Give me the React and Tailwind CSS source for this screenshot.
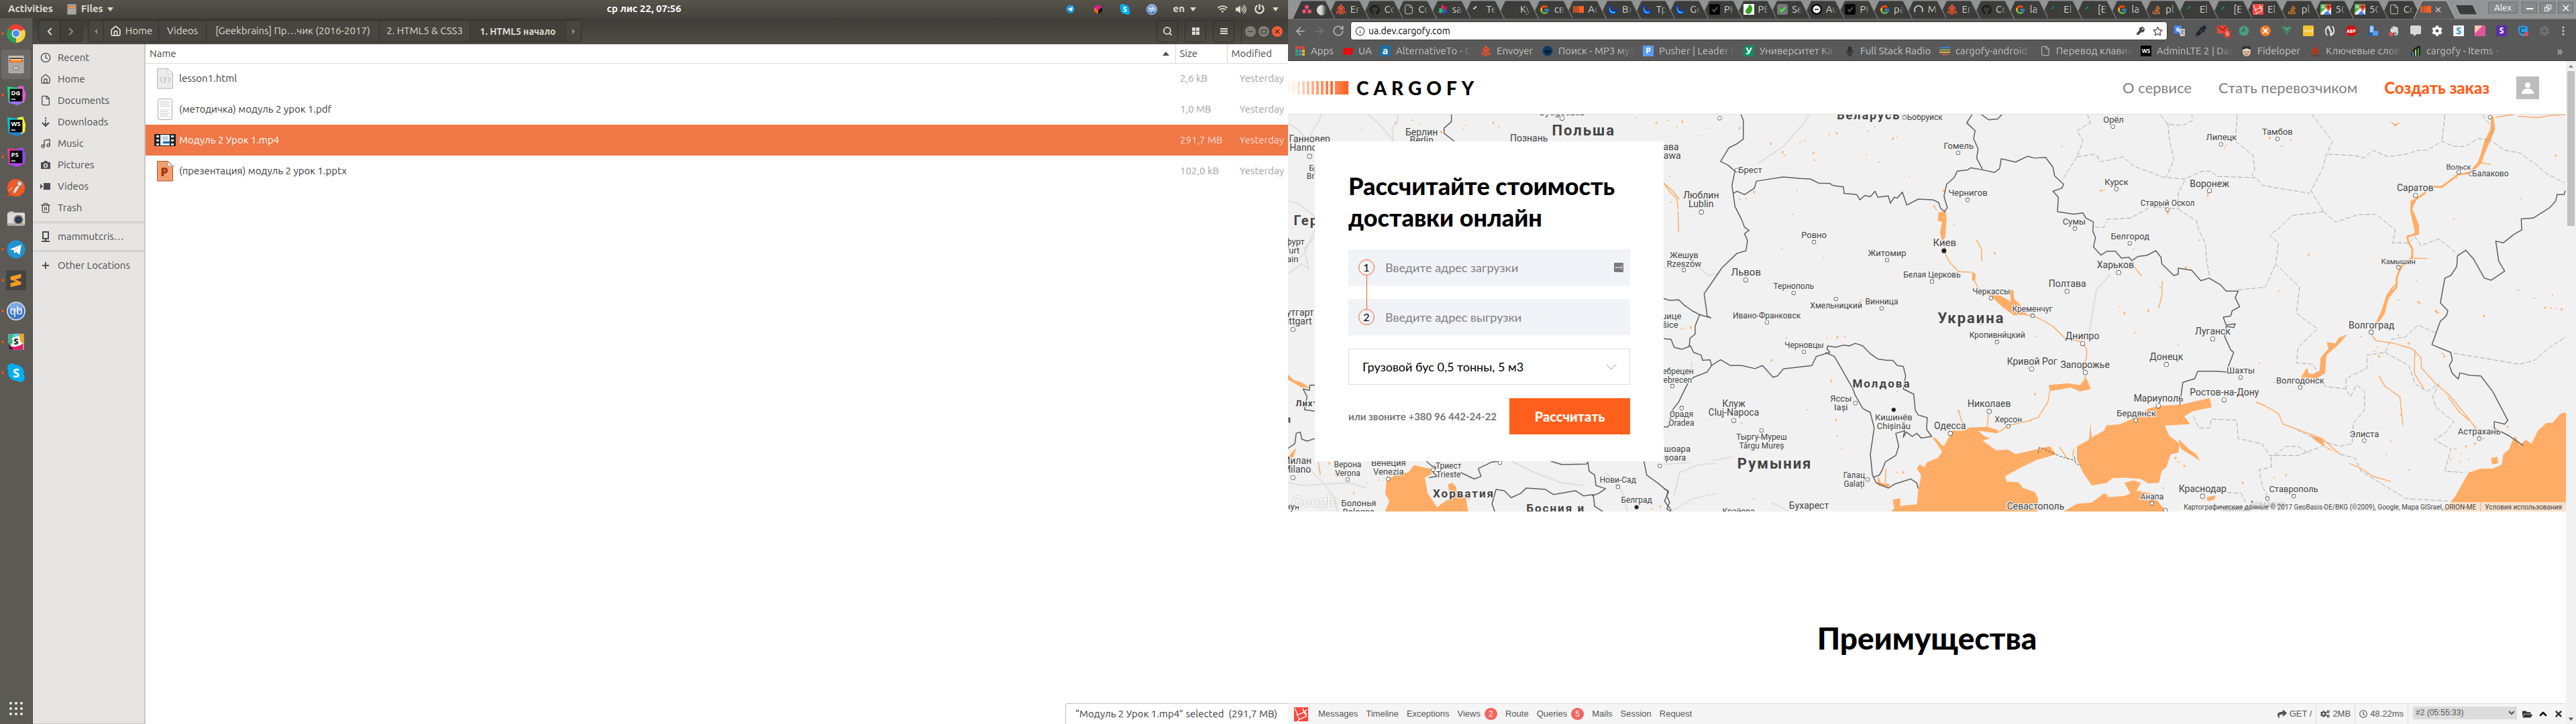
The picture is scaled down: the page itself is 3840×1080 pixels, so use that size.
import React from "react";
import { FaGithub, FaYoutube, FaStackOverflow, FaVuejs, FaMicrophone, FaKey, FaRegStar, FaShare, FaCogs, FaRegClock, FaFolderOpen, FaTimes, FaCog, FaEvernote, FaPowerOff, FaVolumeUp, FaWifi, FaCommentAlt, FaEyeDropper } from "react-icons/fa";
import { FcGoogle } from "react-icons/fc";
import { Home, Search, ArrowLeft, ArrowRight, RotateCw, ChevronLeft, ChevronRight, ChevronUp, File, Clock, Music, Trash2, Info } from "lucide-react";

/* ---------- small drawings ---------- */

const Svg = ({ s = 16, box = 16, children, className = "" }) => (
  <svg width={s} height={s} viewBox={`0 0 ${box} ${box}`} className={`shrink-0 ${className}`} aria-hidden="true">
    {children}
  </svg>
);

const Caret = ({ className = "" }) => (
  <svg width="9" height="6" viewBox="0 0 9 6" className={`shrink-0 ${className}`} aria-hidden="true">
    <path d="M0 0h9L4.500 6z" fill="currentColor" />
  </svg>
);

const Rocket = () => (
  <Svg>
    <g fill="none" stroke="#f0532d" strokeWidth="1.300">
      <path d="M8 .8c2 1.600 2.600 4.200 2.200 7.200H5.800C5.400 5 6 2.400 8 .8z" fill="#f0532d" />
      <path d="M5.500 4.500C3 5 2.500 7 3.800 8.500M10.500 4.500c2.500.5 3 2.500 1.700 4M4.500 9.500 1.500 12v2.500M11.500 9.500l3 2.500v2.500M6.200 9v6.500M8 9v7M9.800 9v6.500M4 11v3.500M12 11v3.500" />
    </g>
    <circle cx="8" cy="4.800" r="1" fill="#3c3c3b" />
  </Svg>
);
const Asana = () => (
  <Svg>
    <g fill="#f0506e"><circle cx="8" cy="4.500" r="3" /><circle cx="4" cy="11" r="3" /><circle cx="12" cy="11" r="3" /></g>
  </Svg>
);
const Burst = () => (
  <Svg>
    <path d="M8 0l2 5-3 3-2-4z" fill="#e8274b" /><path d="M15 5l-4 4-4-2 4-3z" fill="#c71f5b" />
    <path d="M1 7l5-1 2 4-3 4-4-2 2-3z" fill="#1fc46b" /><path d="M8 8l5 1 2 4-4-1-1 4-3-4z" fill="#3c53d9" />
  </Svg>
);
const CargoBars = () => (
  <Svg>
    <g fill="#ff5f1c"><path d="M0 3h1.500v10H0zM2.500 3h1.500v10H2.500zM5 3h2v10H5zM8 3h8v10H8z" /></g>
  </Svg>
);
const Bird = () => (
  <Svg>
    <path d="M1 1l4 2 1 6 3 1 6-3-1 4-4 4-5 0-3-3 1-4z" fill="#1030d8" /><path d="M3 3l2 7 4 2 4-1-3 3-5-1-2-4z" fill="#25d4f5" />
  </Svg>
);
const Ticked = ({ bg = "#060606", fg = "#555" }) => (
  <Svg><rect width="16" height="16" rx="3" fill={bg} /><path d="M4.500 8l2.500 3 5-6" fill="none" stroke={fg} strokeWidth="2" /></Svg>
);
const Pear = () => (
  <Svg><rect width="16" height="16" fill="#fff" /><path d="M10 1c4 3 4 8 1 12-3 3-7 2-8-1-.6-4 3-5 4-8 .5-2 1.500-3 3-3z" fill="#35a020" /></Svg>
);
const Badge = () => (
  <Svg><circle cx="8" cy="8" r="8" fill="#000" /><circle cx="8" cy="8" r="5" fill="#fff" stroke="#fff" strokeWidth="2" strokeDasharray="1.500 1" /><path d="M5 8h6" stroke="#444" strokeWidth="2" /></Svg>
);
const Arc = () => (
  <Svg><path d="M3 12a6 6 0 1 1 10 0" fill="none" stroke="#c9c9c9" strokeWidth="2" /></Svg>
);
const Tick = ({ c }) => (
  <Svg><path d="M3 7c3 0 3-3 5-3" fill="none" stroke={c} strokeWidth="2" /></Svg>
);
const MapsPin = () => (
  <Svg>
    <rect width="16" height="16" rx="1" fill="#4caf50" /><path d="M0 14L13 1l3 3v12H2z" fill="#eee" /><path d="M4 16l6-6 6 6z" fill="#4285f4" /><path d="M0 12l3 3-3 1z" fill="#ffd54f" />
    <path d="M12 0c2.500 0 4 1.700 4 4 0 2.500-3 4-4 8-1-4-4-5.500-4-8 0-2.300 1.500-4 4-4z" fill="#ea4335" /><circle cx="12" cy="4" r="1.500" fill="#8c1b12" /><circle cx="4" cy="4" r="2" fill="none" stroke="#fff" />
  </Svg>
);
const LaravelBox = ({ s = 16 }) => (
  <Svg s={s}><rect width="16" height="16" fill="#f9483c" /><path d="M1 1l5 13 8-4-3-5 4-2M3 9l10-4M10 1l1 4 4 3M4 16l2-2" stroke="#fff" strokeWidth="1" fill="none" /></Svg>
);
const Letter = ({ bg, fg = "#fff", t, r = 1, size = 12, s = 16 }) => (
  <Svg s={s}>
    <rect width="16" height="16" rx={r} fill={bg} />
    <text x="8" y={8 + size * 0.36} fontSize={size} textAnchor="middle" fontWeight="700" fontFamily="Open Sans, sans-serif" fill={fg}>{t}</text>
  </Svg>
);
const Dots = ({ s = 16, bg = "#f2c230" }) => (
  <Svg s={s}><rect width="16" height="16" rx="1.500" fill={bg} /><circle cx="3.500" cy="8" r="1.200" fill="#fff" /><circle cx="7" cy="8" r="1.200" fill="#fff" /><circle cx="10.500" cy="8" r="1.200" fill="#fff" /><path d="M13.500 4.500v7" stroke="#fff" /></Svg>
);
const ChromeLogo = () => (
  <Svg s={28} box={32} className="h-8">
    <path d="M16 16L2.200 8A16 16 0 0 1 29.800 8z" fill="#e34133" /><path d="M16 16L29.800 8A16 16 0 0 1 16 32z" fill="#fdd13b" /><path d="M16 16v16A16 16 0 0 1 2.200 8z" fill="#27a35a" />
    <path d="M16 9h13.500l.3-1 1 2H16z" fill="#e34133" /><circle cx="16" cy="16" r="7.500" fill="#f4f4f4" /><circle cx="16" cy="16" r="5.800" fill="#4a8af4" />
  </Svg>
);
const Cabinet = ({ s = 28 }) => (
  <Svg s={s} box={32}>
    <rect x="3" y="1" width="26" height="30" rx="1.500" fill="#c4c2bf" /><rect x="5" y="5" width="22" height="8" fill="#55281a" /><path d="M6 7h20v6H6z" fill="#f58220" /><path d="M6 7h20v2H6z" fill="#ffd9a8" />
    <rect x="4" y="13" width="24" height="17" fill="#a9a7a4" /><rect x="12" y="20" width="8" height="5" rx="1" fill="#eee" stroke="#666" /><path d="M13 23h6" stroke="#666" />
  </Svg>
);
const JetBrains = ({ t, a, b, c }) => (
  <Svg s={30} box={32}>
    <path d="M2 2l14 2 8-3 7 14-2 12-9 4L4 28z" fill={a} /><path d="M18 3l9-2 4 12-1 12-6 4z" fill={b} /><path d="M4 28l2-8 16 2 2 7-6 3z" fill={c} />
    <rect x="6" y="6" width="20" height="20" fill="#000" />
    <text x="8" y="16" fontSize="10" fontWeight="700" fontFamily="Open Sans, sans-serif" fill="#fff">{t}</text>
    <path d="M8 22.500h7" stroke="#fff" strokeWidth="1.500" />
  </Svg>
);
const Postman = () => (
  <Svg s={28} box={32}><circle cx="16" cy="16" r="15" fill="#f15a24" /><path d="M1 31l1-6 6 5z" fill="#d94717" /><circle cx="22" cy="9" r="4" fill="#ddd" stroke="#777" /><path d="M20 12c-4 1-7 5-9 12l3 2 4-6 4-7z" fill="#e9e4dc" stroke="#777" strokeWidth=".8" /><path d="M10 15l-6 6" stroke="#fff" strokeWidth="1" /></Svg>
);
const CameraApp = () => (
  <Svg s={28} box={32}><rect x="1" y="6" width="30" height="22" rx="2" fill="#dcdbd9" /><rect x="1" y="24" width="30" height="4" fill="#a9a8a6" /><path d="M4 4h8v3H4z" fill="#ccc" /><circle cx="20" cy="18" r="9" fill="#888" stroke="#eee" /><circle cx="20" cy="18" r="6" fill="#333" /><circle cx="20" cy="18" r="3" fill="#1c4a7a" /><circle cx="28" cy="25" r="1.500" fill="#f93" /></Svg>
);
const TelegramApp = ({ s = 28 }) => (
  <Svg s={s} box={32}><circle cx="16" cy="16" r="15.500" fill="#1f93d2" /><path d="M5 16L25 8l-3 17-6-5-3 3-1-6z" fill="#fff" /><path d="M12 18l10-8-7 9z" fill="#c8dcec" /></Svg>
);
const Sublime = () => (
  <Svg s={30} box={32}><rect width="32" height="32" rx="2" fill="#444" /><path d="M7 10l17-4v6l-9 3 9 4v4L7 27v-6l9-3-9-3z" fill="#ff9a1f" /></Svg>
);
const Qb = ({ s = 28 }) => (
  <Svg s={s} box={32}><circle cx="16" cy="16" r="15" fill="#3d76c8" stroke="#d5dde8" strokeWidth="2" /><ellipse cx="16" cy="10" rx="12" ry="8" fill="#7fa9e2" /><text x="16" y="22" fontSize="18" textAnchor="middle" fontFamily="Open Sans, sans-serif" fill="#fff">qb</text></Svg>
);
const SlackApp = () => (
  <Svg s={28} box={32}><path d="M3 3h26v26H3z" fill="#fff" /><path d="M3 3h13L8 22l-5-4z" fill="#3eb890" /><path d="M12 2h14v8L11 8z" fill="#70cadb" /><path d="M24 2h5v18l-6-5-2-12z" fill="#e9a820" /><path d="M8 24l20-5v10H8z" fill="#e01765" /><path d="M3 17l8 12H3z" fill="#3b1d3c" /><path d="M9 9l12-3 4 15-13 4z" fill="#fff" /><text x="16" y="21" fontSize="14" textAnchor="middle" fontWeight="800" fontFamily="Open Sans, sans-serif" fill="#222">S</text></Svg>
);
const SkypeApp = ({ s = 28 }) => (
  <Svg s={s} box={32}><circle cx="16" cy="16" r="13.500" fill="#00aff0" /><circle cx="9" cy="8" r="8" fill="#00aff0" /><circle cx="23" cy="24" r="8" fill="#00aff0" /><text x="16" y="23.500" fontSize="21" textAnchor="middle" fontWeight="700" fontFamily="Open Sans, sans-serif" fill="#fff">S</text></Svg>
);

/* ---------- file manager ---------- */

const dock = [
  ["Chrome", <ChromeLogo />, true],
  ["Files", <Cabinet />, true, true],
  ["DataGrip", <JetBrains t="DG" a="#22d88f" b="#e45bdc" c="#9775f8" />, true],
  ["WebStorm", <JetBrains t="WS" a="#00cdd7" b="#f4ee3d" c="#2086d7" />, false],
  ["PhpStorm", <JetBrains t="PS" a="#f1359c" b="#8d4bf6" c="#b345f1" />, true],
  ["Postman", <Postman />, false],
  ["Camera", <CameraApp />, false],
  ["Telegram", <TelegramApp />, true],
  ["Sublime Text", <Sublime />, true],
  ["qBittorrent", <Qb />, true],
  ["Slack", <SlackApp />, true],
  ["Skype", <SkypeApp />, true],
];

function Dock() {
  return (
    <nav aria-label="Dock" className="flex w-[49px] shrink-0 flex-col border-r border-[#4a4945] bg-[#5c5a55]">
      {dock.map(([name, icon, running, active]) => (
        <button key={name} aria-label={name} className="flex h-[46px] items-center">
          <span className={running ? "ml-[2px] h-1 w-1 rounded-full bg-[#e95420]" : "ml-[2px] h-1 w-1"} />
          <span className={active ? "-ml-1 flex h-11 w-11 items-center justify-center rounded bg-[#6c6a66]" : "-ml-1 flex h-11 w-11 items-center justify-center"}>{icon}</span>
        </button>
      ))}
      <button aria-label="Show applications" className="mt-auto mb-3 flex justify-center pr-px">
        <Svg s={22} box={22}>
          {[3, 11, 19].map((y) => [3, 11, 19].map((x) => <circle key={x + "-" + y} cx={x} cy={y} r="2" fill="#f3f2f0" />))}
        </Svg>
      </button>
    </nav>
  );
}

function TopBar() {
  return (
    <header className="grid h-[27px] shrink-0 grid-cols-3 items-center bg-linear-to-b from-[#56534b] to-[#45433d] text-[15px] font-semibold text-[#dfdbd2]">
      <div className="flex items-center pl-3">
        <button>Activities</button>
        <button className="ml-5 flex items-center gap-1.5"><Cabinet s={16} />Files<Caret /></button>
      </div>
      <button className="justify-self-center text-white">ср лис 22, 07:56</button>
      <div className="flex items-center justify-end pr-[14px]">
        <button aria-label="Telegram" className="mr-[27px]"><TelegramApp s={13} /></button>
        <button aria-label="Toolbox" className="mr-6">
          <Svg><path d="M8 1l6 4-6 4-6-4z" fill="#e31d8c" /><path d="M2 5l6 4v6l-6-4z" fill="#f6651d" /><path d="M14 5L8 9v6l6-4z" fill="#111" /></Svg>
        </button>
        <button aria-label="Skype" className="mr-6"><SkypeApp s={16} /></button>
        <button aria-label="qBittorrent" className="mr-6"><Qb s={16} /></button>
        <button className="flex items-center gap-2">en<Caret /></button>
        <button aria-label="System" className="ml-8 flex items-center gap-3">
          <FaWifi size={15} /><FaVolumeUp size={16} /><FaPowerOff size={15} /><Caret />
        </button>
      </div>
    </header>
  );
}

const crumb = "flex items-center justify-center border-r border-[#33322e]";

function FilesHeader() {
  return (
    <div className="flex h-[39px] shrink-0 items-center bg-linear-to-b from-[#3d3c38] to-[#4f4d46] px-2 text-[15px] text-[#dfdbd2]">
      <div className="flex h-[33px] overflow-hidden rounded border border-[#302f2b] bg-[#484640]">
        <button aria-label="Back" className="flex w-8 items-center justify-center border-r border-[#302f2b]"><ChevronLeft size={18} strokeWidth={2.500} /></button>
        <button aria-label="Forward" className="flex w-8 items-center justify-center bg-[#403f3a] text-[#8f8c84]"><ChevronRight size={18} strokeWidth={2.500} /></button>
      </div>
      <nav aria-label="Path" className="ml-2 flex h-[33px] overflow-hidden rounded border border-[#302f2b] bg-[#484640] whitespace-nowrap">
        <button aria-label="Scroll left" className={`${crumb} w-[23px] text-[#8f8c84]`}><Svg s={8} box={8}><path d="M6 0v8L2 4z" fill="currentColor" /></Svg></button>
        <button className={`${crumb} w-[82px] gap-1.5`}><Home size={17} strokeWidth={2.500} />Home</button>
        <button className={`${crumb} w-[71px]`}>Videos</button>
        <button className={`${crumb} w-[258px]`}>[Geekbrains] Пр…чик (2016-2017)</button>
        <button className={`${crumb} w-[135px]`}>2. HTML5 &amp; CSS3</button>
        <button className={`${crumb} w-[143px] bg-[#42403b] text-sm font-bold`}>1. HTML5 начало</button>
        <button aria-label="Scroll right" className="flex w-[22px] items-center justify-center text-[#8f8c84]"><Svg s={8} box={8}><path d="M2 0v8l4-4z" fill="currentColor" /></Svg></button>
      </nav>
      <div className="ml-auto flex items-center">
        <button aria-label="Search" className="mr-[10px] flex h-[33px] w-8 items-center justify-center rounded border border-[#302f2b]"><Search size={15} strokeWidth={3} /></button>
        <button aria-label="Grid view" className="mr-[10px] flex h-[33px] w-8 items-center justify-center rounded border border-[#302f2b]"><Svg s={11} box={11}><path d="M0 0h5v5H0zM6 0h5v5H6zM0 6h5v5H0zM6 6h5v5H6z" fill="currentColor" /></Svg></button>
        <button aria-label="Menu" className="mr-[10px] flex h-[33px] w-8 items-center justify-center rounded border border-[#302f2b]"><Svg s={11} box={11}><path d="M0 1h11v2H0zM0 4.500h11v2H0zM0 8h11v2H0z" fill="currentColor" /></Svg></button>
        <div className="mr-[5px] h-9 border-l border-[#33322e]" />
        <button aria-label="Minimise" className="mr-1 flex size-4 items-center justify-center rounded-full bg-[#7f7d77]"><Svg s={10} box={10}><path d="M1 5h8" stroke="#33322e" strokeWidth="1.200" /></Svg></button>
        <button aria-label="Maximise" className="mr-1 flex size-4 items-center justify-center rounded-full bg-[#7f7d77]"><Svg s={10} box={10}><path d="M1.500 2.500h7v5h-7z" fill="none" stroke="#33322e" /></Svg></button>
        <button aria-label="Close" className="flex size-4 items-center justify-center rounded-full bg-[#ee6034]"><Svg s={10} box={10}><path d="M2 2l6 6M8 2L2 8" stroke="#5a1f0c" strokeWidth="1.200" /></Svg></button>
      </div>
    </div>
  );
}

const places = [
  ["Recent", <Clock size={16} />],
  ["Home", <Home size={16} />],
  ["Documents", <File size={16} />],
  ["Downloads", <Svg><path d="M8 1v2M8 4.500v2M8 8v5M3 9l5 5 5-5" fill="none" stroke="currentColor" strokeWidth="2" /></Svg>],
  ["Music", <Music size={16} />],
  ["Pictures", <Svg><path d="M1 4h4l1-2h4l1 2h4v10H1z" fill="currentColor" /><circle cx="8" cy="9" r="2.500" fill="none" stroke="#e6e5e3" strokeWidth="1.600" /></Svg>],
  ["Videos", <Svg><path d="M5 3h10v10H5zM0 4l4 4-4 4z" fill="currentColor" /></Svg>],
  ["Trash", <Trash2 size={16} />],
];

const placeRow = "flex h-8 w-full items-center gap-[10px] pl-[11px] text-left";

function Places() {
  return (
    <aside className="w-[168px] shrink-0 border-r-2 border-b border-[#cac8c5] bg-[#e6e5e3] pt-[4px] text-[15px] text-[#4c4c4c]">
      {places.map(([name, icon]) => (
        <button key={name} className={placeRow}>{icon}{name}</button>
      ))}
      <hr className="mt-1 h-[3px] border-y border-[#cac8c5]" />
      <button className={`${placeRow} my-1`}>
        <Svg><path d="M4 1h8v10H4z" fill="none" stroke="currentColor" strokeWidth="2" /><path d="M8 11v3M2 15h12" stroke="currentColor" strokeWidth="2" /></Svg>
        mammutcris…
      </button>
      <hr className="h-[3px] border-y border-[#cac8c5]" />
      <button className={`${placeRow} mt-1`}>
        <Svg><path d="M8 3v10M3 8h10" stroke="currentColor" strokeWidth="2" /></Svg>
        Other Locations
      </button>
    </aside>
  );
}

const PageIcon = ({ children, fill = "#ececec", stroke = "#b5b5b5" }) => (
  <svg width="24" height="31" viewBox="0 0 24 31" aria-hidden="true">
    <path d="M.5.5h16l7 7v22.500H.5z" fill={fill} stroke={stroke} /><path d="M16 .5l7.500 7.500H16z" fill="#fafafa" stroke={stroke} strokeWidth=".6" />
    {children}
  </svg>
);

const files = [
  ["lesson1.html", "2,6 kB", <PageIcon><path d="M8 13l-4 4 4 4M16 13l4 4-4 4M13 12l-2 10" fill="none" stroke="#9a9a9a" /></PageIcon>],
  ["(методичка) модуль 2 урок 1.pdf", "1,0 MB",
    <svg width="22" height="32" viewBox="0 0 22 32" aria-hidden="true"><rect x=".5" y=".5" width="21" height="31" rx="2.500" fill="#fff" stroke="#a9a9a9" /><path d="M3 4h15M3 6.500h16M3 9h14M3 11.500h16M3 17h15M3 19.500h12M3 22h16M3 24.500h13M3 27h15" stroke="#cfcfcf" /></svg>],
  ["Модуль 2 Урок 1.mp4", "291,7 MB",
    <svg width="32" height="18" viewBox="0 0 32 18" aria-hidden="true"><rect width="32" height="18" fill="#1d2426" /><rect x="9" y="1" width="14" height="16" fill="#dfe9f2" /><path d="M13 5h7M13 7.500h7" stroke="#8aa" /><path d="M13 11h10v3H13z" fill="#1d6fae" /><g fill="#fff"><rect x="3" y="2" width="4" height="3" rx="1" /><rect x="3" y="8" width="4" height="3" rx="1" /><rect x="3" y="14" width="4" height="3" rx="1" /><rect x="25" y="2" width="4" height="3" rx="1" /><rect x="25" y="8" width="4" height="3" rx="1" /><rect x="25" y="14" width="4" height="3" rx="1" /></g></svg>],
  ["(презентация) модуль 2 урок 1.pptx", "102,0 kB",
    <PageIcon fill="#f0a070" stroke="#b5542c"><text x="11" y="23" fontSize="18" fontWeight="800" textAnchor="middle" fontFamily="Open Sans, sans-serif" fill="#a8330f">P</text></PageIcon>],
];

function FileTable() {
  return (
    <table className="w-full table-fixed text-left text-[15px] text-[#3c3c3c]">
      <colgroup><col /><col className="w-[77px]" /><col className="w-[91px]" /></colgroup>
      <thead>
        <tr className="h-7 border-b border-[#dcdad8] text-[#4c4c4c]">
          <th className="pl-[6px] font-normal"><span className="flex items-center justify-between pr-[9px]">Name<Svg s={10} box={10}><path d="M0 8h10L5 2z" fill="#4c4c4c" /></Svg></span></th>
          <th className="border-l border-[#dcdad8] pl-[6px] font-normal">Size</th>
          <th className="border-l border-[#dcdad8] pl-[6px] font-normal">Modified</th>
        </tr>
      </thead>
      <tbody>
        {files.map(([name, size, icon], i) => (
          <tr key={name} className={i === 2 ? "h-[46px] bg-[#f07746] text-white" : "h-[46px]"}>
            <td><span className="flex items-center"><span className="flex w-[50px] justify-center pl-[8px]">{icon}</span>{name}</span></td>
            <td className={i === 2 ? "pl-[7px] whitespace-nowrap text-[#fbdccf]" : "pl-[7px] whitespace-nowrap text-[#a3a3a3]"}>{size}</td>
            <td className={i === 2 ? "pr-1.5 text-right text-[#fbdccf]" : "pr-1.5 text-right text-[#a3a3a3]"}>Yesterday</td>
          </tr>
        ))}
      </tbody>
    </table>
  );
}

function FileManager() {
  return (
    <section className="flex w-1/2 flex-col font-['Ubuntu','Open_Sans',sans-serif]">
      <TopBar />
      <div className="flex min-h-0 flex-1">
        <Dock />
        <div className="flex min-w-0 flex-1 flex-col">
          <FilesHeader />
          <div className="flex min-h-0 flex-1">
            <Places />
            <main className="relative min-w-0 flex-1 bg-white">
              <FileTable />
              <div className="absolute right-0 bottom-0 flex h-[31px] w-[332px] items-center rounded-tl border-t border-l border-[#c4c2bf] bg-white px-[14px] text-[15px] whitespace-pre text-[#3c3c3c]">“Модуль 2 Урок 1.mp4” selected  (291,7 MB)</div>
            </main>
          </div>
        </div>
      </div>
    </section>
  );
}

/* ---------- browser chrome ---------- */

const DocFile = () => <File size={16} strokeWidth={1.500} className="shrink-0 text-[#c9c9c9]" />;
const tabs = [
  [<Asana />, "⬤"], [<Rocket />, "Er"], [<FaGithub className="text-[#1b1b1b]" />, "Co"], [<DocFile />, "Co"], [<Burst />, "sa"],
  [<Tick c="#ddd" />, "Te"], [<Tick c="#3c3c3b" />, "Ky"], [<FcGoogle />, "св"], [<CargoBars />, "Ac"], [<Bird />, "Вх"], [<Bird />, "Тр"], [<Bird />, "Ge"],
  [<Ticked />, "PH"], [<Pear />, "PE"], [<Ticked bg="#777" fg="#3f3" />, "Se"], [<Badge />, "Au"], [<Ticked />, "PH"], [<FcGoogle />, "pa"], [<Arc />, "M"],
  [<Rocket />, "Er"], [<FaGithub className="text-[#1b1b1b]" />, "Co"], [<FcGoogle />, "la"], [<Tick c="#0f8a80" />, "El"], [<Tick c="#0f8a80" />, "[E"], [<FcGoogle />, "la"],
  [<FaStackOverflow className="text-[#f48024]" />, "pl"], [<Tick c="#0f8a80" />, "El"], [<Tick c="#0f8a80" />, "[E"], [<LaravelBox />, "El"], [<FaStackOverflow className="text-[#f48024]" />, "pl"],
  [<MapsPin />, "50"], [<MapsPin />, "50"], [<DocFile />, "Co"],
];

const TabShape = ({ fill, stroke }) => (
  <svg className="absolute top-0 left-0 h-full w-[calc(100%+12px)]" viewBox="0 0 62 28" preserveAspectRatio="none" aria-hidden="true">
    <path d="M0 28L12 2Q13 1 14 1H47Q48 1 49 2L62 28z" fill={fill} />
    <path d="M0 28L12 2Q13 1 14 1H47Q48 1 49 2L62 28" fill="none" stroke={stroke} />
  </svg>
);

function TabStrip() {
  return (
    <div role="tablist" className="flex h-7 bg-[#939495] pl-[7px]">
      <div className="flex min-w-0 flex-1 flex-row-reverse">
        <button role="tab" aria-selected="true" aria-label="Cargofy" className="relative z-10 flex min-w-0 flex-1 items-center">
          <TabShape fill="#595959" stroke="#b8b8b8" />
          <span className="relative ml-[10px] flex items-center gap-1.5"><CargoBars /><Svg s={9} box={9}><path d="M1 1l7 7M8 1L1 8" stroke="#c8c8c8" strokeWidth="1.500" /></Svg></span>
        </button>
        {[...tabs].reverse().map(([icon, title], i) => (
          <button key={i} role="tab" aria-selected="false" className="relative flex min-w-0 flex-1 items-center">
            <TabShape fill="#3c3c3b" stroke="#8d8e8f" />
            <span className="relative ml-[13px] flex w-[37px] items-center gap-1.5 overflow-hidden text-[15px] text-[#d8d8d8] mask-r-from-80%">
              <span className="flex w-4 shrink-0 justify-center">{icon}</span><span>{title}</span>
            </span>
          </button>
        ))}
      </div>
      <button aria-label="New tab" className="ml-[10px] flex w-10 items-center">
        <svg width="36" height="17" viewBox="0 0 36 17" aria-hidden="true"><path d="M1 1h24q2 0 3 2l6 13H10q-2 0-3-2z" fill="#3c3c3b" stroke="#a9aaab" /></svg>
      </button>
      <div className="mt-[3px] ml-[10px] flex h-[17px] gap-[6px] pr-1 text-[13px] text-white">
        <button className="flex w-11 items-center justify-center border border-[#6e6f70] bg-[#88898a]">Alex</button>
        <div className="flex gap-1">
          <button aria-label="Minimise" className="flex w-[23px] items-center justify-center border border-[#6e6f70] bg-[#88898a]"><Svg s={10} box={10}><path d="M0 6h10" stroke="#fff" strokeWidth="2" /></Svg></button>
          <button aria-label="Restore" className="flex w-[23px] items-center justify-center border border-[#6e6f70] bg-[#88898a]"><Svg s={10} box={10}><path d="M.5 3.500h6v6h-6zM3.500.5h6v6h-6z" fill="none" stroke="#fff" /></Svg></button>
          <button aria-label="Close" className="flex w-[23px] items-center justify-center border border-[#6e6f70] bg-[#88898a]"><Svg s={10} box={10}><path d="M1 1l8 8M9 1L1 9" stroke="#fff" strokeWidth="1.500" /></Svg></button>
        </div>
      </div>
    </div>
  );
}

const extensions = [
  ["Translate", <Svg><rect width="11" height="12" rx="1" fill="#4285f4" /><path d="M7 5h9v11H9z" fill="#ccc" /><path d="M10 8h5M12.500 7v2c0 2-1.500 3-3 4M11 10l4 4" stroke="#667" fill="none" /><text x="5.500" y="9" fontSize="8" textAnchor="middle" fontWeight="700" fontFamily="Open Sans, sans-serif" fill="#fff">G</text></Svg>],
  ["Picker", <FaEyeDropper className="text-[#1d2433]" />],
  ["Mail", <Svg s={20} box={20} className="-mr-1"><path d="M0 2h16v12H0z" fill="#e04a3f" /><path d="M1 3l7 6 7-6" fill="none" stroke="#7c1c15" strokeWidth="1.500" /><rect x="10" y="9" width="10" height="11" fill="#d93a30" /><text x="15" y="18" fontSize="9" textAnchor="middle" fontFamily="Open Sans, sans-serif" fill="#fff">9</text></Svg>],
  ["Timer", <Svg><circle cx="8" cy="8" r="7.500" fill="#4f9a86" /><path d="M8 3v5H4" fill="none" stroke="#2b5d50" strokeWidth="1.500" /></Svg>],
  ["Proxy", <Svg><circle cx="8" cy="8" r="8" fill="#f47a2a" /><path d="M4 4l8 8M12 4l-8 8" stroke="#fff" strokeWidth="1.500" /><circle cx="8" cy="8" r="2.500" fill="#fff" /></Svg>],
  ["Vue", <FaVuejs className="text-[#3fb27f]" />],
  ["Passwords", <Dots />],
  ["Similar", <Svg><path d="M7 1C2 3 0 8 4 15M9 15c5-2 7-7 3-14" fill="none" stroke="#ddd" strokeWidth="2" /><path d="M7 1c-2 5 6 8 2 14" fill="none" stroke="#ddd" strokeWidth="3" /></Svg>],
  ["Adblock", <Svg><path d="M5 0h6l5 5v6l-5 5H5l-5-5V5z" fill="#d0120c" /><text x="8" y="11" fontSize="7" textAnchor="middle" fontWeight="700" fontFamily="Open Sans, sans-serif" fill="#fff">ABP</text></Svg>],
  ["Devices", <Svg><rect x="3" width="7" height="11" fill="#9ecbff" stroke="#1e3a66" /><rect x="8" y="8" width="8" height="7" fill="#4aa0ff" /><path d="M0 12h8v3H0z" fill="#1e5fae" /></Svg>],
  ["Evernote", <span className="relative flex"><FaEvernote className="text-[#ddd]" /><span className="absolute bottom-0 left-0 size-1.5 rounded-full bg-[#f5485b]" /></span>],
  ["Chat", <FaCommentAlt className="text-[#d8d8d8]" />],
  ["Settings", <FaCog className="text-white" />],
  ["Stylish", <Letter bg="#f4f4f4" fg="#2a8fd8" t="S" size={14} />],
  ["Palette", <Svg><rect width="16" height="16" fill="#e2559b" /><path d="M0 0h12L0 12z" fill="#ffc7b0" /></Svg>],
  ["Session", <Letter bg="#5a2ca8" t="S" size={12} />],
  ["Shield", <Svg><path d="M1 2l7-2 7 2v6c0 4-4 7-7 8-3-1-7-4-7-8z" fill="#2f9de4" /><path d="M11 5a4 4 0 1 0 0 5" fill="none" stroke="#244" strokeWidth="1.500" /><circle cx="13" cy="13" r="3" fill="#f5485b" /></Svg>],
  ["Disabled", <FaCog className="text-[#707070]" />],
];

const cutMark = "w-[114px] overflow-hidden whitespace-nowrap mask-r-from-80%";
const bookmarks = [
  ["Apps", <Svg>{["#ea4335", "#34a853", "#34a853"].map((a, r) => [a, r ? "#4285f4" : "#ea4335", r ? "#fbbc05" : "#ea4335"].map((c, i) => <rect key={r + "-" + i} x={1 + i * 5} y={1 + r * 5} width="4" height="4" fill={c} />))}</Svg>, "w-[35px]"],
  ["UA", <FaYoutube className="text-[#f00]" />, "w-[20px]"],
  ["AlternativeTo - C", <Letter bg="#1b6fa8" t="a" size={14} />, cutMark],
  ["Envoyer", <Rocket />, "w-[56px]"],
  ["Поиск - MP3 муз", <Svg><circle cx="8" cy="8" r="7.500" fill="#0d3a66" /><path d="M3 8h10l-2 2H9L8 9l-1 1H5zM6 12h4" fill="#04121f" stroke="#04121f" /></Svg>, cutMark],
  ["Pusher | Leader I", <Letter bg="#5a9bf8" t="P" size={12} />, cutMark],
  ["Университет Ка", <Letter bg="#118a64" t="У" size={14} />, cutMark],
  ["Full Stack Radio", <FaMicrophone className="text-[#2f2f2f]" />, "w-[106px] whitespace-nowrap"],
  ["cargofy-android", <Svg><path d="M0 2h16v2H0z" fill="#3d7bd0" /><path d="M0 5.500h16v2H0z" fill="#8fb04a" /><path d="M0 9h16v2H0z" fill="#e6b34a" /><path d="M2 12.500h12l-3 2-2-1-2 1.500-2-1z" fill="#e2574c" /></Svg>, cutMark],
  ["Перевод клавиа", <DocFile />, cutMark],
  ["AdminLTE 2 | Das", <Letter bg="#000" t="WS" size={8} r={0} />, cutMark],
  ["Fideloper", <Svg><path d="M1 3l4-3 3 2 3-2 3 3v4H2z" fill="#2b332d" /><circle cx="8" cy="10" r="6" fill="#d9b99a" /><path d="M4 9h3M9 9h3M6 13h4" stroke="#8a4a3a" /><path d="M2 7h12" stroke="#dce8d8" strokeWidth="2" /></Svg>, "w-[66px]"],
  ["Ключевые слова", <Svg><path d="M9 0c1 4 4 5 3 9-.5 3-3 4-4 4s-4-1-4-4c0-4 4-5 5-9z" fill="#c22f10" /><path d="M2 15h12" stroke="#7f200c" /></Svg>, cutMark],
  ["cargofy - Items - I", <Svg><path d="M1 15C2 6 6 2 15 0v15z" fill="#222" /><path d="M3 15V9h2v6z" fill="#2f9de4" /><path d="M7 15V6h2v9z" fill="#f8c43a" /><path d="M11 15V4h2v11z" fill="#3ab54a" /></Svg>, cutMark],
];

function BrowserChrome() {
  return (
    <div className="shrink-0 bg-[#595959] font-['Ubuntu','Open_Sans',sans-serif]">
      <TabStrip />
      <div className="flex h-[34px] items-center border-t border-[#757575] pt-px pr-[11px] text-[#bdbdbd]">
        <button aria-label="Back" className="ml-[9px]"><ArrowLeft size={19} /></button>
        <button aria-label="Forward" className="ml-[9px] text-[#777]"><ArrowRight size={19} /></button>
        <button aria-label="Reload" className="mr-[9px] ml-[10px]"><RotateCw size={18} /></button>
        <label className="flex h-7 min-w-0 flex-1 items-center rounded-sm border border-[#3c3c3b] bg-white px-[6px] text-[#4a4a4a]">
          <Info size={15} />
          <input aria-label="Address" defaultValue="ua.dev.cargofy.com" className="ml-[5px] min-w-0 flex-1 bg-transparent text-sm text-black outline-none" />
          <FaKey size={12} />
          <FaRegStar size={15} className="ml-3" />
        </label>
        <div className="ml-[10px] flex items-center gap-4 pr-3">
          {extensions.map(([name, icon]) => (
            <button key={name} aria-label={name} className="flex w-4 justify-center">{icon}</button>
          ))}
        </div>
        <button aria-label="Menu"><Svg s={16} box={16} ><circle cx="8" cy="3" r="1.600" fill="#ccc" /><circle cx="8" cy="8" r="1.600" fill="#ccc" /><circle cx="8" cy="13" r="1.600" fill="#ccc" /></Svg></button>
      </div>
      <nav aria-label="Bookmarks" className="flex h-[29px] items-center gap-3 border-b border-[#3c3c3b] pr-5 pl-[10px] text-[15px] text-[#c4c4c4]">
        {bookmarks.map(([name, icon, w]) => (
          <a key={name} href="#" className="flex items-center gap-2">
            <span className="flex w-4 justify-center">{icon}</span>
            <span className={w}>{name}</span>
          </a>
        ))}
        <button aria-label="More bookmarks" className="ml-auto text-lg">»</button>
      </nav>
    </div>
  );
}

/* ---------- map ---------- */

/* The map is stored as three tiles on a common grid: x scale, y scale and left edge per tile. */
const SY = 1 / 2.57;
const tiles = [
  {
    x: 0, sx: 1 / 2.45,
    water: [
      "0,1025 20,1045 50,1055 78,1075 50,1075 10,1050 0,1045",
      "360,1430 400,1405 440,1400 460,1372 495,1380 520,1385 525,1405 500,1420 510,1480 530,1510 545,1535 560,1520 590,1500 585,1445 600,1440 615,1455 615,1470 650,1500 658,1550 355,1550 370,1510 355,1480",
      "170,1405 185,1390 190,1410 180,1420", "0,1340 30,1305 20,1340 5,1348",
    ],
    rivers: ["110,1360 115,1385 118,1410", "1372,290 1395,325 1420,350 1425,390"],
    dark: [
      "597,27 597,55 570,80 570,100 608,131",
      "98,1065 80,1065 78,1085 55,1080 70,1110 65,1130 60,1160 98,1165",
      "98,1270 70,1280 50,1272 45,1245 30,1250 25,1290 0,1308",
      "505,1357 525,1375 540,1380 530,1400 545,1415 515,1420",
      "630,1400 680,1425 705,1415 695,1385 745,1360 775,1357",
      "960,1357 1000,1370 1090,1368 1095,1360 1100,1395 1120,1410 1125,1450 1160,1462 1135,1480 1110,1490",
      "755,1550 745,1520 760,1465 790,1470 815,1497 850,1480 870,1460 940,1465 970,1485 1050,1470 1080,1490 1115,1485 1120,1530 1150,1550",
      "1300,1357 1310,1410 1350,1440 1390,1475 1375,1510 1400,1545",
    ],
    dash: [],
    roads: [
      "0,60 40,90 75,135", "75,131 90,90 115,50 120,27", "290,27 330,60 355,90 385,131", "385,131 380,80 400,50 402,30", "0,360 40,370 98,420", "98,470 60,560 20,600", "0,640 50,600 75,620 60,540 98,500",
      "0,1440 60,1450 130,1445 220,1440 290,1460", "60,1357 90,1400 130,1440 170,1500 180,1550", "815,1357 900,1400 1000,1440 1080,1450", "1240,1550 1220,1470 1160,1400", "1410,1490 1430,1400 1500,1370 1568,1365", "1400,1550 1480,1500 1568,1480",
    ],
    specks: "270,85 395,60 455,50 480,65 560,95 640,85 650,70 750,60 770,75 1270,40 1345,60 1390,50 1420,75 1440,55 1500,110 1530,80 240,1480 290,1440 330,1430 260,1520 660,1500 210,1390 1360,1530 1330,1540 1250,1500 150,1365",
  },
  {
    x: 560, sx: 1 / 2.24,
    water: [
      "845,1522 850,1470 860,1410 845,1385 855,1370 870,1380 880,1360 915,1345 930,1320 897,1265 910,1270 925,1290 935,1300 965,1240 1000,1240 1020,1228 1078,1225 1090,1228 1118,1238 1115,1250 1050,1240 1070,1260 1090,1270 1065,1278 1110,1315 1150,1312 1175,1330 1250,1310 1250,1350 1195,1380 1140,1415 1145,1435 1185,1438 1200,1460 1240,1475 1250,1500 1248,1550 760,1550 775,1530",
      "1482,1215 1470,1240 1430,1265 1420,1275 1380,1300 1380,1350 1400,1400 1430,1450 1482,1440",
      "1335,1550 1380,1520 1430,1515 1470,1480 1482,1485 1482,1550",
      "765,1505 790,1498 790,1530 770,1540", "1425,1210 1430,1280 1420,1285",
      "918,402 942,400 945,430 940,500 930,512 922,480 930,440 915,435",
      "1090,720 1125,722 1160,745 1155,700 1168,702 1170,735 1185,750 1212,795 1170,798 1130,765",
      "1030,630 1042,640 1040,665 1030,665", "1410,1036 1427,1080 1390,1090 1360,1075 1290,1088 1285,1065 1350,1058 1390,1065",
      "1250,1310 1290,1300 1310,1330 1270,1345 1250,1350", "715,1410 725,1440 755,1445 750,1458 715,1450",
    ],
    rivers: [
      "935,512 940,560 955,595 985,630 1030,632", "1038,665 1050,695 1095,725", "1205,795 1240,802 1270,820 1300,840 1340,885", "1340,885 1400,900 1413,930 1412,960 1404,985 1408,1040",
      "1290,1085 1283,1130 1250,1190 1225,1198", "1080,1225 1085,1170", "1000,1220 985,1165", "1045,510 1062,545 1062,590", "900,375 912,395", "1230,1200 1150,1220 1120,1245",
      "0,290 30,320 52,352", "48,400 50,480", "740,1440 742,1385", "1320,1300 1350,1350", "1370,1310 1365,1340",
    ],
    dark: [
      "258,27 266,50 266,122 245,140 218,155 190,208 215,222 238,245 228,300 232,330 238,380 260,430 270,460 285,472 270,485 280,510 275,550 245,560 195,615 135,715 142,770 145,800 158,808 120,795 95,780 70,760 50,738 20,740 0,733",
      "232,330 245,322 270,335 303,310 310,283 400,267 455,273 490,275 520,292 555,292 565,300 600,305 603,330 645,335 655,355 672,338 690,343 706,322 715,345 750,340 757,368 770,345 780,348 797,325 812,375 850,352 900,355 918,365 925,388 938,400 947,385 936,340 945,295 970,270 980,245 1015,240 1025,232 1065,240 1105,250 1122,235 1127,197 1175,210 1215,188 1240,195 1275,192 1300,230 1305,262 1335,295 1330,310 1300,322 1318,345 1315,400 1370,410 1400,405 1410,425 1435,440 1433,475 1442,500 1435,535 1460,567 1480,552",
      "1030,27 1012,60 1040,90 1035,120 1050,160 1045,195 1065,238", "1060,27 1085,48 1115,45 1130,27",
      "120,795 105,840 105,870 88,885 85,918",
      "0,887 25,890 35,920 60,928 90,915 100,940 125,950 130,970 155,968 160,990 190,968 222,990 260,990 305,1002 330,990 365,1035 380,1030 400,1003 495,990 510,955 555,940",
      "160,990 145,1015 100,1035 80,1060 50,1130 30,1160 15,1225 0,1225",
      "555,940 545,925 548,915 575,920 600,912 620,915 640,905 665,915 690,945 715,965 745,970 765,970 780,990 800,993 808,1030 800,1080 835,1100 840,1160 850,1180 880,1190 878,1235 895,1262 860,1268 845,1250 830,1262 810,1245 800,1265 805,1240 775,1250 785,1300 775,1335 740,1360 730,1390 720,1410 700,1418",
      "540,940 570,955 600,1015 632,1080 640,1105 665,1155 690,1170 703,1230 690,1330 697,1410 710,1440 750,1460 770,1445 825,1425 845,1440 850,1462",
      "0,1462 15,1470 10,1490 20,1515 10,1540 25,1550",
    ],
    dash: [
      "1415,27 1425,60 1380,90 1400,130 1380,190 1330,280", "1380,190 1440,180 1460,210 1478,200", "1440,460 1470,460 1478,440",
    ],
    roads: ["315,215 400,150 470,60 485,27", "0,615 120,615 150,645 190,635", "15,1005 90,1010 95,975", "160,1355 230,1340", "1492,640 1445,700 1420,870", "360,1515 420,1550", "0,1370 90,1360"],
    specks: "553,105 578,100 683,92 677,182 397,172 455,135 470,128 358,140 505,203 535,577 360,970 480,1160 820,265 253,80 255,352 275,348 302,325 395,545 780,115 1015,60 745,750 1245,880 935,320 720,210 600,330 765,120 430,410 445,320 1460,320 1470,318 70,848 90,845 60,850 410,885 560,1050 705,1070 780,1090 1060,830 660,740 970,450 1105,560 300,1500 545,885 580,882 605,880 780,1400 800,1400 720,1435 1215,1000 1240,1100 260,1210 20,265 80,565 25,365 1452,190 500,175 405,185 705,75 985,1165 1170,980 1330,150 575,1200 580,1260 595,1310",
  },
  {
    x: 1220, sx: 1 / 2.24,
    water: [
      "0,1220 45,1215 95,1190 140,1155 175,1145 250,1140 345,1115 352,1150 290,1165 260,1185 280,1215 195,1220 210,1260 245,1290 240,1325 215,1330 200,1380 185,1395 175,1440 140,1442 115,1425 60,1420 20,1422 0,1440",
      "0,1495 60,1490 80,1480 60,1440 90,1430 115,1440 100,1470 150,1480 200,1550 0,1550",
      "240,1270 275,1310 300,1330 312,1355 285,1335 250,1310",
      "1535,1170 1515,1175 1490,1210 1470,1210 1440,1240 1420,1290 1400,1275 1380,1295 1365,1260 1355,1280 1345,1310 1325,1330 1320,1370 1290,1385 1250,1385 1210,1400 1200,1420 1190,1440 1165,1490 1145,1520 1120,1550 1535,1550",
      "1285,1345 1305,1340 1308,1365 1288,1370",
      "805,870 775,885 765,905 735,900 742,925 715,960 712,1010 690,1022 675,1020 670,998 650,1035 700,1040 730,1020 735,950 775,910",
      "1293,35 1298,85 1280,135 1262,180 1252,215 1222,248 1214,245 1240,210 1250,180 1262,130 1282,85 1285,38",
      "970,700 968,670 955,700 940,740 930,790 912,820 900,825 918,780 935,720 960,680",
      "1015,360 1040,345 1020,390 1042,450 1045,485 1005,498 1030,480 1015,400",
      "680,1258 720,1270 730,1300 780,1330 740,1310 700,1280", "335,1495 365,1488 360,1505 338,1510", "945,52 965,65 982,57 965,74",
    ],
    rivers: [
      "1300,38 1360,28", "1375,35 1440,40 1480,32 1535,28", "1220,250 1175,258 1120,305 1075,305 1062,330 1030,355 1018,390 1040,450 1040,485 1005,495 1008,515 1022,545 1020,578 985,610 970,650 968,690 940,730 925,790 905,825",
      "1250,212 1285,220", "1015,578 1070,580", "885,870 900,895 960,905 1020,925 1050,960 1052,1000 1100,1060", "1100,1060 1150,1110 1200,1180 1240,1240", "910,1030 930,1070 980,1110 990,1220",
      "500,1130 530,1145 575,1175 590,1215 650,1240 720,1270 780,1330", "85,600 118,648", "187,665 185,720 175,770", "340,325 338,345", "655,1035 648,1060", "810,1365 850,1385 890,1415 950,1435", "1030,930 1028,1020 1060,1080", "1140,1110 1180,1170 1210,1200",
    ],
    dark: [
      "0,552 30,552 50,578 75,575 85,588 105,572 135,568 165,550 182,575 185,600 225,645 240,640 240,617 285,625 315,665 343,655 380,680 400,705 440,705 430,730 445,765 420,780 415,800 390,805 400,835 430,830 425,845 400,840 395,880 415,930 425,940 405,1000 405,1015 360,1012 305,1012 295,1040 255,1055 245,1140",
      "1532,320 1528,335 1505,335 1500,360 1480,385 1425,425 1385,428 1387,470 1360,488 1325,520 1300,513 1310,590 1330,628 1285,663 1262,655 1225,580 1200,548 1172,570 1170,610 1150,645 1130,655 1115,750 1140,780 1135,800 1115,820 1087,910 1150,940 1155,970 1145,990 1155,1020 1175,1042 1180,1018 1215,1028 1250,1030 1290,1090 1340,1200 1330,1215 1295,1205 1295,1230 1345,1260 1392,1297",
    ],
    dash: [
      "0,205 55,190 90,225 190,268 260,275 320,245 350,245 370,265 500,270 520,300 600,315 680,330",
      "180,30 205,65 255,70 288,50 285,30", "205,60 210,120 225,200 200,268", "437,30 430,130 490,185 495,240 485,265",
      "685,27 755,130 735,180 720,240 683,320 725,400", "740,180 830,185 860,195 890,165 940,190 1000,180 1040,165 1070,165 1120,130 1160,150 1200,150 1240,120 1280,125",
      "1130,30 1120,130", "1255,30 1290,80 1280,125 1330,165 1380,175 1430,215 1470,255 1530,290",
      "0,430 80,425 150,380 240,390 240,325 265,275", "240,390 300,435 310,475 330,520 335,590 345,650",
      "725,400 620,415 575,465 545,490 575,520 565,600 645,690 635,790 705,850 640,920 635,980 690,985 730,1070 800,1080 815,1110 835,1065 862,1090 862,1160 825,1210 820,1290 780,1300 720,1280 640,1240",
      "725,400 765,440 840,412 900,410 965,470 955,520 1010,520 1030,495 1050,530 1110,505 1175,565",
      "440,700 530,690 565,600", "1160,943 1380,985 1430,970 1480,920 1535,880",
      "1100,865 1040,835 1000,880 950,890 930,940 870,950 870,1000 800,1040 800,1080", "930,940 1010,990 1030,1060 1070,1090 1110,1060 1090,1110 1100,1150 1160,1205 1130,1250 1095,1275 1150,1310 1130,1395 1190,1400",
      "290,1185 310,1230 345,1230 350,1195 435,1200 440,1270 520,1290 545,1335 640,1335 720,1300",
      "780,1330 830,1345 850,1395 1000,1500 1140,1510", "550,1340 550,1380 510,1390 520,1450 540,1500", "560,1335 600,1300 640,1300 680,1330", "380,1475 450,1480 480,1550",
    ],
    roads: [],
    specks: "400,145 545,118 585,150 395,155 205,405 90,545 45,765 60,790 95,865 240,910 265,615 615,125 1035,665 1045,750 1040,745 1105,785 1100,782 1108,787 1105,788 1260,800 1375,702 1490,720 1465,768 1485,770 1500,772 1520,775 1428,732 1125,945 1128,955 975,740 1385,350 1500,185 1160,430 1170,272 675,565 180,690 310,510 140,780 575,705 510,980 440,1105 600,1480 560,1055 230,1345 240,1360 225,1320 260,1375 1165,1310 1185,1330 1200,1300 1210,1350 1180,1360 1230,1290 1150,1350 935,1330 985,1180 950,1280 905,920 910,955 895,935 975,875 1010,905 850,880 1120,945 170,1490 190,1460 100,1440 455,1440 1010,1390 560,1420 1340,1225 1260,1270 1310,1240 600,1410 1475,1480",
  },
];

/* name, x, baseline, font size, pin x, pin y, optional second line */
const cities = [
  [
    ["Берлин", 488, 108, 14, 0, 0], ["Ганновер", 79, 134, 14, 79, 188, "Hannover"], ["Познань", 880, 130, 14, 0, 0], ["Bydgoszcz", 1000, 30, 14, 1001, 42], ["Berlin", 488, 140, 14, 0, 0],
    ["Брауншвейг", 160, 243, 12, 0, 0], ["Braunschweig", 160, 274, 12, 0, 0], ["Франкфурт", -22, 526, 13, 0, 0, "Frankfurt"], ["am Main", -24, 594, 13, 0, 0], ["Штутгарт", 20, 800, 14, 18, 852, "Stuttgart"],
    ["Милан", 32, 1368, 14, 18, 1420, "Milano"], ["Верона", 218, 1380, 12, 218, 1427, "Verona"], ["Венеция", 367, 1374, 13, 366, 1425, "Venezia"], ["Триест", 586, 1385, 12, 530, 1390, "Trieste"],
    ["Болонья", 258, 1528, 13, 0, 0, "Bologna"], ["Генуя", 0, 1542, 13, 0, 0], ["Нови-Сад", 1205, 1438, 12, 1205, 1455], ["Белград", 1273, 1517, 12, 1273, 1533], ["", 0, 0, 12, 774, 1363], ["", 0, 0, 12, 1358, 1375],
  ],
  [
    ["Варшава", -15, 165, 14, 0, 0, "Warszawa"], ["Люблин", 125, 350, 14, 126, 402, "Lublin"], ["Жешув", 68, 578, 13, 67, 624, "Rzeszów"], ["Кошице", 5, 812, 13, 0, 0, "Košice"], ["Дебрецен", 38, 1023, 12, 29, 1069, "Debrecen"],
    ["Орадя", 59, 1188, 12, 60, 1153, "Oradea"], ["Тимишоара", 10, 1322, 13, 0, 0, "Timișoara"], ["Бобруйск", 872, 48, 12, 804, 39], ["Гомель", 985, 159, 13, 983, 175], ["Брест", 289, 252, 13, 244, 241], ["", 0, 0, 12, 187, 42],
    ["Чернигов", 1016, 339, 13, 1015, 355], ["Орёл", 1502, 59, 13, 1500, 74], ["Курск", 1512, 298, 13, 1512, 314], ["Сумы", 1371, 450, 13, 1373, 465], ["Ровно", 502, 501, 13, 502, 517], ["Житомир", 746, 571, 13, 746, 586],
    ["Киев", 938, 532, 15, 936, 550], ["Белая Церковь", 896, 653, 12, 896, 668], ["Львов", 275, 645, 15, 274, 662], ["Тернополь", 434, 697, 12, 434, 712], ["Хмельницкий", 576, 770, 12, 575, 735], ["Винница", 728, 755, 12, 728, 771],
    ["Ивано-Франковск", 344, 810, 12, 345, 825], ["Черкассы", 1094, 717, 12, 1093, 732], ["Кременчуг", 1231, 784, 12, 1232, 799], ["Полтава", 1348, 689, 14, 1347, 706], ["Днипро", 1398, 889, 14, 1399, 906],
    ["Кропивни́цкий", 1114, 884, 12, 1113, 900], ["Черновцы", 469, 923, 12, 468, 938], ["Кривой Рог", 1230, 986, 14, 1229, 1003], ["Запорожье", 1407, 1000, 14, 1408, 1017], ["Яссы", 592, 1127, 13, 640, 1134, "Iași"],
    ["Клуж", 234, 1148, 14, 234, 1201, "Cluj-Napoca"], ["Кишинёв", 768, 1200, 13, 768, 1160, "Chișinău"], ["Тыргу-Муреш", 327, 1275, 12, 327, 1239, "Târgu Mureș"], ["Николаев", 1087, 1148, 14, 1087, 1166], ["Херсон", 1151, 1208, 12, 1151, 1223],
    ["Одесса", 956, 1233, 14, 957, 1250], ["Галац", 636, 1421, 12, 681, 1427, "Galați"], ["Бухарест", 485, 1539, 14, 0, 0], ["Севастополь", 1242, 1543, 14, 0, 0], ["Крайова", 250, 1560, 12, 0, 0],
  ],
  [
    ["Липецк", 384, 126, 13, 383, 142], ["Тамбов", 571, 105, 13, 571, 121], ["Воронеж", 344, 306, 14, 344, 320], ["Старый Оскол", 204, 378, 12, 204, 392], ["Белгород", 79, 506, 13, 78, 522], ["Харьков", 30, 617, 14, 41, 634],
    ["Вольск", 1176, 238, 11, 1176, 249], ["Балаково", 1282, 265, 12, 1217, 256], ["Саратов", 1031, 321, 14, 1032, 338], ["Камышин", 975, 602, 11, 975, 614], ["Волгоград", 885, 848, 14, 884, 862], ["Луганск", 355, 871, 14, 355, 888],
    ["Донецк", 200, 969, 14, 200, 986], ["Шахты", 448, 1020, 13, 448, 1036], ["Волгодонск", 647, 1059, 13, 647, 1074], ["Ростов-на-Дону", 394, 1105, 14, 393, 1122], ["Мариуполь", 174, 1128, 14, 173, 1145], ["Бердянск", 100, 1185, 13, 98, 1200],
    ["Элиста", 861, 1264, 13, 861, 1278], ["Астрахань", 1245, 1254, 13, 1245, 1270], ["Краснодар", 321, 1476, 14, 321, 1491], ["Ставрополь", 625, 1475, 13, 625, 1491], ["Анапа", 152, 1503, 12, 152, 1518], ["", 0, 0, 12, 538, 1500], ["", 0, 0, 12, 1281, 38], ["", 0, 0, 12, 197, 1544], ["Армавир", 538, 1532, 13, 0, 0], ["Майкоп", 430, 1550, 12, 0, 0],
  ],
];
const countries = [
  [["Польша", 1080, 108, 22], ["Германия", 152, 453, 20], ["Хорватия", 642, 1495, 17], ["Босния и", 978, 1551, 17], ["Лихтенштейн", 142, 1145, 13], ["Швейцария", -92, 1210, 14]],
  [["Украина", 1027, 828, 22], ["Молдова", 728, 1074, 17], ["Румыния", 371, 1385, 22], ["Беларусь", 685, 45, 18]],
  [],
];

function UkraineMap() {
  return (
    <svg className="absolute inset-0 h-full w-full bg-[#f1f1f1]" viewBox="0 0 1905 592" preserveAspectRatio="xMidYMid slice" role="img" aria-label="Карта Украины">
      {tiles.map((t, i) => (
        <g key={i} transform={`translate(${t.x} -11) scale(${t.sx} ${SY})`} fill="none" strokeLinejoin="round">
          {t.roads.map((p) => <polyline key={p} points={p} stroke="#dedede" strokeWidth="2" vectorEffect="non-scaling-stroke" />)}
          {t.water.map((p) => <polygon key={p} points={p} fill="#ffad66" />)}
          {t.rivers.map((p, k) => <polyline key={p} points={p} stroke="#ffad66" strokeWidth={i === 2 && k === 2 ? 3 : 1.500} vectorEffect="non-scaling-stroke" />)}
          {t.specks.split(" ").map((p, k) => {
            const [x, y] = p.split(",").map(Number);
            return <ellipse key={p + k} cx={x} cy={y} rx={2 + (k % 3) * 1.500} ry={2 + ((k + 1) % 3) * 1.500} fill="#ffb473" />;
          })}
          {t.dash.map((p) => <polyline key={p} points={p} stroke="#a8a8a8" strokeWidth="1" strokeDasharray="7 3" vectorEffect="non-scaling-stroke" />)}
          {t.dark.map((p) => <polyline key={p} points={p} stroke="#5f5f5f" strokeWidth="1.500" vectorEffect="non-scaling-stroke" />)}
        </g>
      ))}
      <path d="M1118 505l2-9 6 2 12 6 14 6 14 4 8 2M1172 510l2 10 8 4" stroke="#555" strokeDasharray="4 2" fill="none" />
      {tiles.map((t, i) => (
        <g key={i} fontFamily="Roboto, sans-serif" fill="#444" textAnchor="middle" stroke="#f3f3f3" strokeWidth="2.500" paintOrder="stroke" strokeLinejoin="round">
          {cities[i].map(([name, x, y, size, px, py, second], k) => (
            <g key={k}>
              {py > 0 && <circle cx={t.x + px * t.sx} cy={py * SY - 11} r={size > 13 ? 3 : 2.500} fill={name === "Киев" || name === "Кишинёв" || name === "Белград" ? "#222" : "#fff"} stroke="#222" strokeWidth="1.200" />}
              {name && <text x={t.x + x * t.sx} y={y * SY - 11} fontSize={size}>{name}</text>}
              {second && <text x={t.x + x * t.sx} y={y * SY + 2} fontSize={size}>{second}</text>}
            </g>
          ))}
          {countries[i].map(([name, x, y, size]) => (
            <text key={name} x={t.x + x * t.sx} y={y * SY - 11} fontSize={size} fontWeight="700" letterSpacing={size > 14 ? 2 : 1}>{name}</text>
          ))}
        </g>
      ))}
    </svg>
  );
}

/* ---------- site ---------- */

const bars = ["opacity-5", "opacity-10", "opacity-20", "opacity-30", "opacity-40", "opacity-50", "opacity-60", "opacity-70", "opacity-80", "opacity-90"];

function SiteHeader() {
  return (
    <header className="flex h-20 items-center border-b border-[#ddd] bg-white pr-10 text-[22px]">
      <a href="#" className="flex items-center gap-3" aria-label="Cargofy">
        <span className="flex h-5 items-stretch gap-[3px]">
          {bars.map((o) => <span key={o} className={`w-1 bg-[#ff5f1c] ${o}`} />)}
          <span className="w-5 bg-linear-to-r from-[#ff8550] to-[#ff5f1c]" />
        </span>
        <span className="text-[28px] leading-none font-black tracking-[7px] text-black">CARGOFY</span>
      </a>
      <nav className="ml-auto flex items-center gap-10 text-[#808080]">
        <a href="#">О сервисе</a>
        <a href="#">Стать перевозчиком</a>
        <a href="#" className="text-2xl font-black text-[#ff5f1c]">Создать заказ</a>
        <a href="#" aria-label="Профиль" className="flex size-[34px] items-center justify-center bg-[#bdbdbd]">
          <Svg s={18} box={18}><circle cx="9" cy="5" r="4" fill="#fff" /><path d="M0 18c0-5 4-8 9-8s9 3 9 8z" fill="#fff" /></Svg>
        </a>
      </nav>
    </header>
  );
}

function AddressField({ n, text, id, children }) {
  return (
    <div className="flex h-[54px] items-center bg-[#f2f3f8] pr-[10px] pl-[15px]">
      <label htmlFor={id} className="flex size-6 items-center justify-center rounded-full border border-[#ff5f1c] text-base text-black">{n}</label>
      <input id={id} aria-label={text} placeholder={text} className="ml-4 min-w-0 flex-1 bg-transparent text-lg outline-none placeholder:text-[#808080]" />
      {children}
    </div>
  );
}

function QuoteForm() {
  return (
    <form className="relative mt-10 ml-10 w-[520px] bg-white px-[50px] pt-[43px] pb-10">
      <h1 className="mb-6 text-[36px] leading-[47px] font-black text-black">Рассчитайте стоимость доставки онлайн</h1>
      <div className="relative flex flex-col gap-5">
        <AddressField n="1" id="from" text="Введите адрес загрузки"><Dots s={14} bg="#7a7a7a" /></AddressField>
        <AddressField n="2" id="to" text="Введите адрес выгрузки" />
        <span className="absolute top-[39px] left-[27px] h-[50px] w-px bg-[#ff5f1c]" />
        <div className="relative">
          <select aria-label="Тип транспорта" className="h-[54px] w-full appearance-none border border-[#dcdcdc] bg-white px-5 text-lg text-black">
            <option>Грузовой бус 0,5 тонны, 5 м3</option>
          </select>
          <svg className="pointer-events-none absolute top-[23px] right-5" width="16" height="9" viewBox="0 0 16 9" aria-hidden="true"><path d="M.5.5L8 8 15.500.5" fill="none" stroke="#999" /></svg>
        </div>
        <div className="flex items-center justify-between">
          <span className="text-[15px] font-bold whitespace-nowrap text-[#777]">или звоните +380 96 442-24-22</span>
          <button type="button" className="h-[54px] w-[180px] bg-[#ff5f1c] text-xl font-black text-white">Рассчитать</button>
        </div>
      </div>
    </form>
  );
}

const Pill = ({ children }) => <span className="ml-1.5 inline-flex h-[18px] w-[19px] items-center justify-center rounded-full bg-[#f4645f] text-xs text-white">{children}</span>;

function DebugBar() {
  return (
    <footer className="flex h-[31px] shrink-0 items-center border-t border-[#ddd] bg-[#f5f5f5] pl-[9px] font-['Liberation_Sans',Arial,sans-serif] text-[13px] text-[#555]">
      <LaravelBox s={21} />
      <nav className="ml-[15px] flex items-center gap-3">
        <button>Messages</button><button>Timeline</button><button>Exceptions</button>
        <button className="flex items-center">Views<Pill>2</Pill></button><button>Route</button>
        <button className="flex items-center">Queries<Pill>5</Pill></button><button>Mails</button><button>Session</button><button>Request</button>
      </nav>
      <div className="ml-auto flex h-full items-center">
        <span className="flex h-full items-center gap-1 border-r border-[#ddd] px-1.5"><FaShare size={14} />GET /</span>
        <span className="flex h-full items-center gap-1 border-r border-[#ddd] px-1.5"><FaCogs size={14} />2MB</span>
        <span className="flex h-full items-center gap-1 border-r border-[#ddd] px-1.5"><FaRegClock size={12} />48.22ms</span>
        <select aria-label="Запросы" className="mr-2 mb-1 ml-[7px] h-[19px] w-[155px] bg-[#dcdcdc] text-xs"><option>#2 (05:55:33)</option></select>
        <button aria-label="Открыть" className="text-[#333]"><FaFolderOpen size={15} /></button>
        <button aria-label="Развернуть" className="mx-2 text-[#111]"><ChevronUp size={16} strokeWidth={4} /></button>
        <button aria-label="Закрыть" className="mr-1 text-[#333]"><FaTimes size={14} /></button>
      </div>
    </footer>
  );
}

function Browser() {
  return (
    <section className="flex w-1/2 flex-col bg-white font-['Lato',sans-serif]">
      <BrowserChrome />
      <div className="flex min-h-0 flex-1">
        <div className="flex min-w-0 flex-1 flex-col">
          <SiteHeader />
          <main className="min-h-0 flex-1 overflow-hidden">
            <section className="relative flex h-[592px] items-start overflow-hidden">
              <UkraineMap />
              <QuoteForm />
              <span className="absolute bottom-1 left-1.5 text-[22px] leading-6 font-medium text-white [text-shadow:0_0_2px_#999]">Google</span>
              <div className="absolute right-0 bottom-0 flex h-[14px] items-center bg-[#f5f5f5]/70 font-['Roboto',sans-serif] text-[10px] text-[#444]">
                <span className="px-1.5">Картографические данные © 2017 GeoBasis-DE/BKG (©2009), Google, Mapa GISrael, ORION-ME</span>
                <a href="#" className="border-l border-[#bbb] px-1.5">Условия использования</a>
              </div>
            </section>
            <h2 className="pt-[161px] text-center text-[46px] leading-[56px] font-black text-black">Преимущества</h2>
          </main>
          <DebugBar />
        </div>
        <div aria-hidden="true" className="flex w-[15px] shrink-0 flex-col items-center bg-[#f1f1f1]">
          <svg width="7" height="15" viewBox="0 0 7 15"><path d="M0 10h7L3.500 5.500z" fill="#8a8a8a" /></svg>
          <div className="h-[231px] w-[11px] bg-[#c1c1c1]" />
          <svg className="mt-auto" width="7" height="15" viewBox="0 0 7 15"><path d="M0 5.500h7L3.500 10z" fill="#505050" /></svg>
        </div>
      </div>
    </section>
  );
}

export default function App() {
  return (
    <div className="flex h-screen overflow-hidden bg-white">
      <FileManager />
      <Browser />
    </div>
  );
}
